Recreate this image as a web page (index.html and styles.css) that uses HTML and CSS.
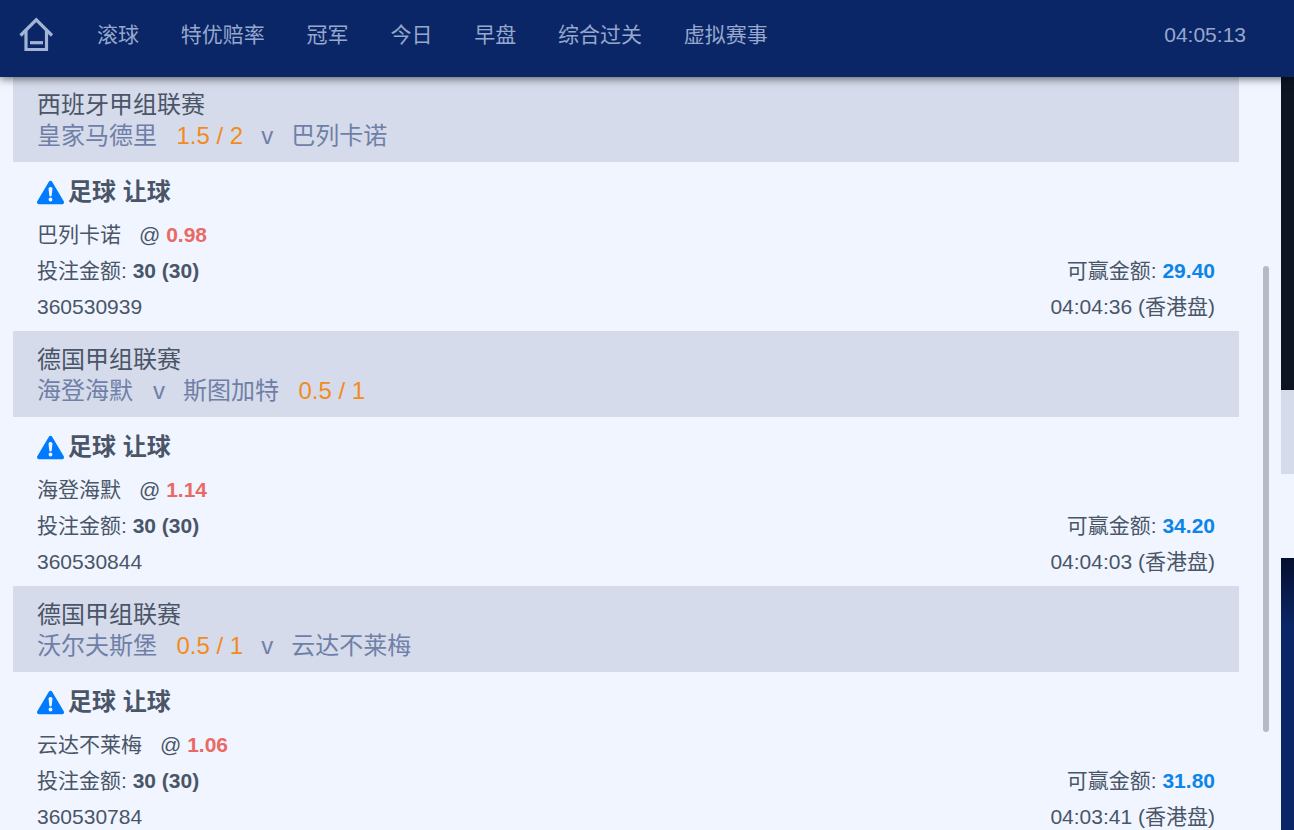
FILE: index.html
```html
<!DOCTYPE html>
<html lang="en">
<head>
<meta charset="UTF-8">
<meta name="viewport" content="width=device-width, initial-scale=1.0">
<title>Bets</title>
<link rel="stylesheet" href="styles.css">
</head>
<body>
  <header class="topbar">
    <svg class="home-icon" width="36" height="36" viewBox="0 0 36 36" fill="none" stroke="#a3b3d6" stroke-width="3.2">
      <path d="M1.500 18.500 17.250 2.800 33 18.500"/>
      <path d="M7 14V32.500H27.500V14"/>
      <path d="M11 25.700H24"/>
    </svg>
    <nav class="nav">
      <span>滚球</span>
      <span>特优赔率</span>
      <span>冠军</span>
      <span>今日</span>
      <span>早盘</span>
      <span>综合过关</span>
      <span>虚拟赛事</span>
    </nav>
    <div class="clock">04:05:13</div>
  </header>

  <div class="page">
    <main class="list">
      <section class="league">
        <div class="league-name">西班牙甲组联赛</div>
        <div class="teams">皇家马德里<span class="hdp">1.5 / 2</span><span class="vs">v</span>巴列卡诺</div>
      </section>
      <section class="bet">
        <div class="bet-title">
          <svg class="warn-icon" width="27" height="27" viewBox="0 0 16 16"><path fill="#007bff" d="M8.982 1.566a1.13 1.13 0 0 0-1.960 0L.165 13.233c-.457.778.091 1.767.98 1.767h13.713c.889 0 1.438-.99.98-1.767L8.982 1.566z"/><path fill="#f0f5ff" d="M8 4.700c.700 0 1.200.5 1.150 1.200l-.4 3.700a.750.750 0 0 1-1.500 0l-.4-3.700C6.800 5.200 7.300 4.700 8 4.700zM8 11a1.150 1.150 0 1 1 0 2.300 1.150 1.150 0 0 1 0-2.300z"/></svg>
          足球 让球
        </div>
        <div class="bet-row"><span>巴列卡诺<span class="at">@</span> <b class="odds">0.98</b></span></div>
        <div class="bet-row"><span>投注金额: <b>30 (30)</b></span><span>可赢金额: <b class="win">29.40</b></span></div>
        <div class="bet-row"><span>360530939</span><span>04:04:36 (香港盘)</span></div>
      </section>

      <section class="league">
        <div class="league-name">德国甲组联赛</div>
        <div class="teams">海登海默<span class="vs">v</span>斯图加特<span class="hdp">0.5 / 1</span></div>
      </section>
      <section class="bet">
        <div class="bet-title">
          <svg class="warn-icon" width="27" height="27" viewBox="0 0 16 16"><path fill="#007bff" d="M8.982 1.566a1.13 1.13 0 0 0-1.960 0L.165 13.233c-.457.778.091 1.767.98 1.767h13.713c.889 0 1.438-.99.98-1.767L8.982 1.566z"/><path fill="#f0f5ff" d="M8 4.700c.700 0 1.200.5 1.150 1.200l-.4 3.700a.750.750 0 0 1-1.500 0l-.4-3.700C6.800 5.200 7.300 4.700 8 4.700zM8 11a1.150 1.150 0 1 1 0 2.300 1.150 1.150 0 0 1 0-2.300z"/></svg>
          足球 让球
        </div>
        <div class="bet-row"><span>海登海默<span class="at">@</span> <b class="odds">1.14</b></span></div>
        <div class="bet-row"><span>投注金额: <b>30 (30)</b></span><span>可赢金额: <b class="win">34.20</b></span></div>
        <div class="bet-row"><span>360530844</span><span>04:04:03 (香港盘)</span></div>
      </section>

      <section class="league">
        <div class="league-name">德国甲组联赛</div>
        <div class="teams">沃尔夫斯堡<span class="hdp">0.5 / 1</span><span class="vs">v</span>云达不莱梅</div>
      </section>
      <section class="bet">
        <div class="bet-title">
          <svg class="warn-icon" width="27" height="27" viewBox="0 0 16 16"><path fill="#007bff" d="M8.982 1.566a1.13 1.13 0 0 0-1.960 0L.165 13.233c-.457.778.091 1.767.98 1.767h13.713c.889 0 1.438-.99.98-1.767L8.982 1.566z"/><path fill="#f0f5ff" d="M8 4.700c.700 0 1.200.5 1.150 1.200l-.4 3.700a.750.750 0 0 1-1.500 0l-.4-3.700C6.800 5.200 7.300 4.700 8 4.700zM8 11a1.150 1.150 0 1 1 0 2.300 1.150 1.150 0 0 1 0-2.300z"/></svg>
          足球 让球
        </div>
        <div class="bet-row"><span>云达不莱梅<span class="at">@</span> <b class="odds">1.06</b></span></div>
        <div class="bet-row"><span>投注金额: <b>30 (30)</b></span><span>可赢金额: <b class="win">31.80</b></span></div>
        <div class="bet-row"><span>360530784</span><span>04:03:41 (香港盘)</span></div>
      </section>
    </main>
    <div class="scroll-thumb"></div>

    <aside class="behind">
      <div class="behind-dark"></div>
      <div class="behind-band"></div>
      <div class="behind-light"></div>
      <div class="behind-navy"></div>
    </aside>
  </div>
</body>
</html>
```

FILE: styles.css
```css
html, body {
  height: 100%;
}

body {
  margin: 0;
  height: 830px;
  overflow: hidden;
  display: flex;
  flex-direction: column;
  font-family: "Liberation Sans", "Noto Sans CJK SC", sans-serif;
  color: #4a5568;
  background: #f0f5ff;
}

/* Top bar */
.topbar {
  position: relative;
  z-index: 2;
  flex: none;
  height: 77px;
  box-sizing: border-box;
  display: flex;
  align-items: center;
  padding: 0 48px 7px 19px;
  background: #0b2666;
  box-shadow: 0 2px 8px rgba(0, 0, 0, 0.55);
  color: #96a8cd;
}

.home-icon {
  flex: none;
}

.nav {
  display: flex;
  gap: 41.8px;
  margin-left: 42px;
  font-size: 21px;
  line-height: 28px;
  margin-top: -1px;
}

.clock {
  margin-left: auto;
  font-size: 21px;
}

/* Page under the bar */
.page {
  position: relative;
  flex: 1;
  min-height: 0;
  display: flex;
}

.list {
  flex: none;
  width: 1226px;
  margin: -1px 42px 0 13px;
  overflow: hidden;
}

.league {
  height: 86px;
  box-sizing: border-box;
  padding: 13px 24px 0;
  background: #d5dbea;
  font-size: 24px;
  line-height: 31px;
}

.teams {
  color: #6f80a8;
}

.hdp {
  margin: 0 18px 0 19.5px;
  color: #f28b1c;
}

.vs {
  margin: 0 18px 0 20px;
}

.teams .hdp + .vs {
  margin-left: 0;
}

.teams .vs + .hdp {
  margin-right: 0;
}

.bet {
  height: 169px;
  box-sizing: border-box;
  padding: 12px 24px 0;
  font-size: 21px;
  line-height: 36px;
}

.bet-title {
  display: flex;
  align-items: center;
  gap: 4px;
  height: 36px;
  margin-bottom: 7px;
  font-size: 24px;
  font-weight: bold;
}

.warn-icon {
  flex: none;
}

.bet-row {
  display: flex;
  justify-content: space-between;
  height: 36px;
}

.at {
  margin-left: 18px;
}

.odds {
  color: #e96a64;
}

.win {
  color: #0d85e8;
}

.scroll-thumb {
  position: absolute;
  left: 1263px;
  top: 189px;
  width: 6px;
  height: 466px;
  border-radius: 3px;
  background: #b5bac6;
}

/* Part of the page behind the panel */
.behind {
  flex: none;
  width: 13px;
  display: flex;
  flex-direction: column;
}

.behind-dark {
  height: 313px;
  background: #0d1522;
}

.behind-band {
  height: 84px;
  background: #d5dbea;
}

.behind-light {
  height: 84px;
  background: #f0f5ff;
}

.behind-navy {
  flex: 1;
  background: linear-gradient(#050f2e, #0b2666 25%);
}
```
